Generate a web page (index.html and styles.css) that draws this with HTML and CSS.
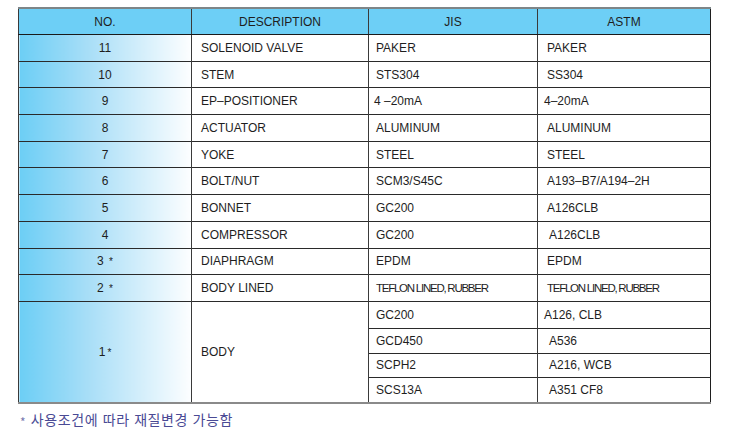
FILE: index.html
```html
<!DOCTYPE html>
<html lang="ko">
<head>
<meta charset="utf-8">
<title>Parts</title>
<link rel="stylesheet" href="styles.css">
</head>
<body>
<div class="page">
  <table class="parts">
    <colgroup>
      <col class="c-no"><col class="c-desc"><col class="c-jis"><col class="c-astm">
    </colgroup>
    <thead>
      <tr><th>NO.</th><th>DESCRIPTION</th><th>JIS</th><th>ASTM</th></tr>
    </thead>
    <tbody>
      <tr><td class="no">11</td><td class="desc">SOLENOID VALVE</td><td>PAKER</td><td class="astm">PAKER</td></tr>
      <tr><td class="no">10</td><td class="desc">STEM</td><td>STS304</td><td class="astm">SS304</td></tr>
      <tr><td class="no">9</td><td class="desc">EP&#8211;POSITIONER</td><td class="jl">4 &#8211;20mA</td><td class="astm al">4&#8211;20mA</td></tr>
      <tr><td class="no">8</td><td class="desc">ACTUATOR</td><td>ALUMINUM</td><td class="astm">ALUMINUM</td></tr>
      <tr><td class="no">7</td><td class="desc">YOKE</td><td>STEEL</td><td class="astm">STEEL</td></tr>
      <tr><td class="no">6</td><td class="desc">BOLT/NUT</td><td>SCM3/S45C</td><td class="astm">A193&#8211;B7/A194&#8211;2H</td></tr>
      <tr><td class="no">5</td><td class="desc">BONNET</td><td>GC200</td><td class="astm">A126CLB</td></tr>
      <tr><td class="no">4</td><td class="desc">COMPRESSOR</td><td>GC200</td><td class="astm ind">A126CLB</td></tr>
      <tr><td class="no">3 <span class="ast">*</span></td><td class="desc">DIAPHRAGM</td><td>EPDM</td><td class="astm">EPDM</td></tr>
      <tr><td class="no">2 <span class="ast">*</span></td><td class="desc">BODY LINED</td><td class="tight">TEFLON LINED, RUBBER</td><td class="astm tight">TEFLON LINED, RUBBER</td></tr>
      <tr class="s1"><td class="no" rowspan="4">1<span class="ast">*</span></td><td class="desc" rowspan="4">BODY</td><td>GC200</td><td class="astm al">A126, CLB</td></tr>
      <tr class="s2"><td>GCD450</td><td class="astm ind">A536</td></tr>
      <tr class="s3"><td>SCPH2</td><td class="astm ind">A216, WCB</td></tr>
      <tr class="s4"><td>SCS13A</td><td class="astm ind">A351 CF8</td></tr>
    </tbody>
  </table>
  <p class="note"><span class="note-ast">*</span> 사용조건에 따라 재질변경 가능함</p>
</div>
</body>
</html>
```
FILE: styles.css
```css
html, body {
  margin: 0;
  padding: 0;
  background: #ffffff;
}
.page {
  padding: 7px 0 0 18px;
  font-family: "Liberation Sans", Arial, sans-serif;
  color: #1e1e1e;
}
.parts {
  border-collapse: collapse;
  table-layout: fixed;
  width: 692px;
  font-size: 12px;
  border-top: 2px solid #7d8588;
  border-bottom: 2px solid #8a8a8a;
  border-left: 1px solid #1e1e1e;
  border-right: 1px solid #1e1e1e;
}
.c-no { width: 173px; }
.c-desc { width: 177px; }
.c-jis { width: 169px; }
.c-astm { width: 173px; }
.parts th {
  background: #6dcff6;
  font-weight: normal;
  height: 25px;
  padding: 0;
  text-align: center;
  border-bottom: 1px solid #1a1a1a;
  border-left: 1px solid #3a3a3a;
}
.parts td {
  height: 26.7px;
  padding: 0 0 0 7px;
  border-top: 1px solid #2a2a2a;
  border-left: 1px solid #3a3a3a;
  white-space: nowrap;
  box-sizing: border-box;
}
.parts td.desc { padding-left: 9px; }
.parts td.astm { padding-left: 9px; }
.parts td.al { padding-left: 6px; }
.parts td.ind { padding-left: 11px; }
.parts td.jl { padding-left: 5px; }
.parts td.no {
  text-align: center;
  padding: 0;
  background: linear-gradient(to right, #6ccef5 0%, #a8def7 40%, #fdfeff 100%);
}
.parts tr.s1 td { height: 27px; }
.parts tr.s2 td { height: 25px; }
.parts tr.s3 td { height: 24px; }
.parts tr.s4 td { height: 26px; }
.parts td.tight {
  letter-spacing: -1.25px;
  font-size: 11.5px;
}
.ast {
  font-size: 10px;
  margin-left: 2px;
}
.note {
  margin: 6px 0 0 2px;
  font-family: "Noto Sans CJK KR", "Noto Sans", sans-serif;
  font-size: 14px;
  letter-spacing: 0.6px;
  color: #4a4a94;
  line-height: 18px;
}
.note-ast {
  font-size: 12px;
  color: #7878b0;
  vertical-align: -2px;
}
```
